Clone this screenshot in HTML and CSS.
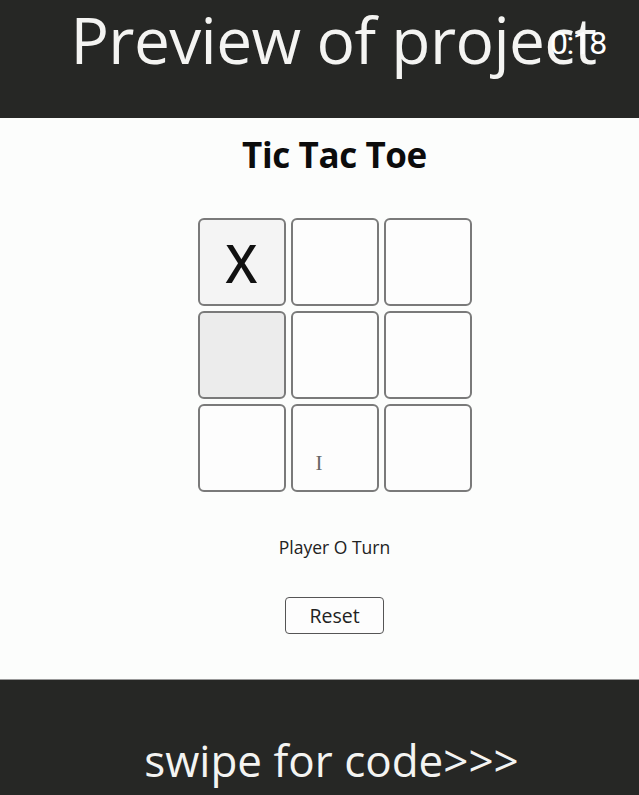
FILE: index.html
```html
<!DOCTYPE html>
<html>
<head>
<meta charset="utf-8">
<link rel="stylesheet" href="styles.css">
</head>
<body>
<header class="top">
  <h1 class="banner">Preview of project</h1>
  <span class="timer">0:18</span>
</header>
<main class="app">
  <h2 class="title">Tic Tac Toe</h2>
  <div class="board">
    <div class="cell filled">X</div>
    <div class="cell"></div>
    <div class="cell"></div>
    <div class="cell hover"></div>
    <div class="cell"></div>
    <div class="cell"></div>
    <div class="cell"></div>
    <div class="cell cursor-cell"><span class="ibeam">I</span></div>
    <div class="cell"></div>
  </div>
  <p class="status">Player O Turn</p>
  <button class="reset">Reset</button>
</main>
<footer class="bottom">
  <p class="swipe">swipe for code&gt;&gt;&gt;</p>
</footer>
</body>
</html>
```
FILE: styles.css
```css
* { box-sizing: border-box; }
html, body { margin: 0; padding: 0; }
body {
  width: 639px;
  height: 795px;
  overflow: hidden;
  font-family: "Open Sans", "Noto Sans", sans-serif;
  background: #fcfdfc;
}
.top {
  position: relative;
  height: 118px;
  background: #262725;
  display: flex;
  justify-content: center;
  padding-left: 28px;
}
.banner {
  margin: 0;
  font-weight: 400;
  font-size: 64px;
  line-height: 88px;
  margin-top: -4px;
  color: #f4f4f2;
  letter-spacing: -0.6px;
  white-space: nowrap;
}
.timer {
  position: absolute;
  left: 550px;
  top: 24px;
  font-size: 32px;
  letter-spacing: -1.5px;
  color: #fff;
  font-family: "Roboto", sans-serif;
}
.app {
  height: 562px;
  display: flex;
  flex-direction: column;
  align-items: center;
  padding-left: 30px;
  border-bottom: 1px solid #999;
}
.title {
  margin: 15px 0 0 0;
  font-size: 35px;
  line-height: 44px;
  font-weight: 700;
  color: #0c0c0c;
  letter-spacing: -0.4px;
}
.board {
  margin-top: 41px;
  display: grid;
  grid-template-columns: repeat(3, 88px);
  grid-template-rows: repeat(3, 88px);
  gap: 5px;
}
.cell {
  border: 2px solid #7a7a7a;
  border-radius: 6px;
  background: #fdfdfd;
  display: flex;
  align-items: center;
  justify-content: center;
  font-family: "Noto Sans", "Open Sans", sans-serif;
  font-size: 52px;
  font-weight: 500;
  color: #111;
  position: relative;
}
.cell.filled { background: #f4f4f4; }
.cell.hover { background: #ececec; }
.ibeam {
  position: absolute;
  left: 23px;
  top: 47px;
  font-family: "Liberation Serif", serif;
  font-weight: 400;
  font-size: 21px;
  color: #666;
  line-height: 1;
}
.status {
  margin: 42px 0 0 0;
  font-size: 17.5px;
  line-height: 26px;
  color: #222;
}
.reset {
  margin-top: 37px;
  width: 99px;
  height: 37px;
  border: 1.5px solid #555;
  border-radius: 4px;
  background: #fdfdfd;
  font-family: "Open Sans", "Noto Sans", sans-serif;
  font-size: 19.5px;
  color: #222;
  padding: 0;
}
.bottom {
  height: 115px;
  background: #262725;
  display: flex;
  justify-content: center;
}
.swipe {
  margin: 50px 0 0 24px;
  font-size: 44px;
  line-height: 60px;
  color: #f4f4f2;
}
```
